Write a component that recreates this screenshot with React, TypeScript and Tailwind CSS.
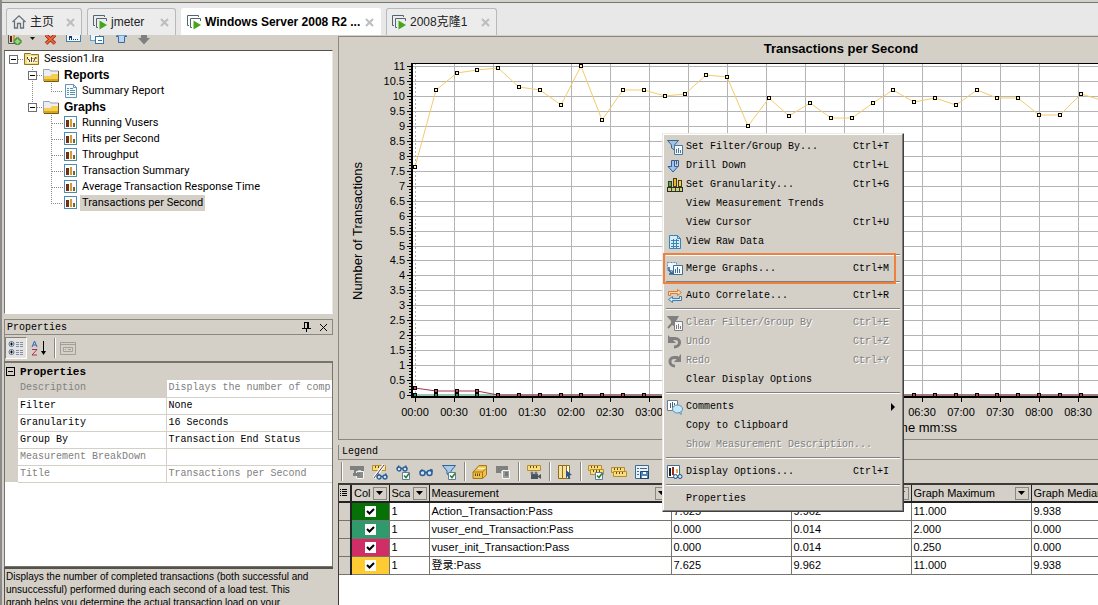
import React from 'react'
import clsx from 'clsx'

const MONO = 'font-["Liberation_Mono","Noto_Sans_CJK_SC",monospace]'
const SANS = 'font-["Liberation_Sans","Noto_Sans_CJK_SC",sans-serif]'
const UI = 'font-["Roboto","Noto_Sans_CJK_SC",sans-serif]'

const svgProps = {
  width: 16,
  height: 16,
  viewBox: '0 0 16 16',
  fill: 'none',
  className: 'shrink-0',
  'aria-hidden': true,
}

/* ---------- tab strip ---------- */

const HomeIcon = () => (
  <svg {...svgProps} stroke="#66717c">
    <path d="M1.5 8 8 1.8 14.5 8M3.5 7v7h3V9.5h3V14h3V7" strokeWidth="1.3" />
  </svg>
)

const MachineIcon = () => (
  <svg {...svgProps}>
    <path d="M3 11.500H1.500V1.500h11V3M6 13.500H4.500v-9h10V7" stroke="#4f6672" />
    <path d="M7.500 6.500 15 11l-7.500 4.500z" fill="#47a51c" />
  </svg>
)

interface TabProps {
  label: string
  icon: React.ReactNode
  width: string
  active?: boolean
}

const Tab: React.FC<TabProps> = ({ label, icon, width, active }) => (
  <div
    className={clsx(
      'flex h-[27px] items-center rounded-t-[3px] border border-b-0 pr-1.5 pl-1',
      width,
      active ? 'border-white bg-white' : 'border-[#b9b9b9] bg-[#ececec]'
    )}
  >
    <button
      className={clsx(
        SANS,
        'flex flex-1 items-center gap-[3px] text-left text-[12px] whitespace-nowrap',
        active ? 'font-bold text-black' : 'text-[#222]'
      )}
    >
      {icon}
      {label}
    </button>
    <button aria-label={`Close ${label}`}>
      <svg width="9" height="9" viewBox="0 0 9 9" stroke="#bdbdbd" strokeWidth="2">
        <path d="m1 1 7 7M8 1 1 8" />
      </svg>
    </button>
  </div>
)

/* ---------- session tree ---------- */

const SessionIcon = () => (
  <svg {...svgProps}>
    <path d="M.5 2.500h6l1 1h7v10H.5z" fill="#f3dc83" stroke="#8d7527" />
    <path d="M3 5h10v7H3z" fill="#fff7d0" />
    <path d="M3.500 6v2l2 1v2M7.500 6v5M9.500 11l2-5M12 6v2M9 7v1M12 10v1" stroke="#54401b" />
  </svg>
)

const FolderIcon = () => (
  <svg {...svgProps}>
    <path d="M.5 2.500h6l1 1.500h8v10H.5z" fill="#eceef3" stroke="#9aa0ae" />
    <path d="M1 9h6l2-2h6.500v7.500H1z" fill="#f3cf4c" />
    <path d="M1 12h14.500v2.500H1z" fill="#d9a51d" />
    <path d="M15.500 4v10.500H1" stroke="#6f5a18" />
  </svg>
)

const ReportIcon = () => (
  <svg {...svgProps}>
    <path d="M2.500 1.500h8l3 3v10h-11z" fill="#f5fbff" stroke="#6c93ad" />
    <path d="M10.500 1.500v3h3" stroke="#6c93ad" />
    <path d="M4 5.500h2M7 5.500h3M4 7.500h2M7 7.500h5M4 9.500h2M7 9.500h5M4 11.500h2M7 11.500h5" stroke="#5a8fa9" />
  </svg>
)

const GraphIcon = () => (
  <svg {...svgProps} shapeRendering="crispEdges">
    <rect x="1.500" y="1.500" width="12" height="12" fill="#fff" stroke="#4c8cb4" />
    <path d="M3 5h3v7H3z" fill="#7a2c10" />
    <path d="M7 4h2v8H7z" fill="#d39b3c" />
    <path d="M10 8h2v4h-2z" fill="#75651d" />
  </svg>
)

const Guide: React.FC<{ level: number; last?: boolean; mid?: boolean }> = ({ level, last, mid }) => {
  const width = [19, 38, 58][level]
  const box = [4, 23][level]
  return (
    <svg
      width={width}
      height="16"
      className="shrink-0"
      fill="none"
      stroke="#8a8a8a"
      strokeDasharray="1 1"
      shapeRendering="crispEdges"
      aria-hidden
    >
      {level === 1 && <path d={last ? 'M27.500 0v4M32 8.500h6' : 'M27.500 0v16M32 8.500h6'} />}
      {level === 0 && <path d="M13 8.500h6" />}
      {level === 2 && <path d={last ? 'M46.500 0v8.500H58' : 'M46.500 0v16M47 8.500h11'} />}
      {level === 2 && mid && <path d="M27.500 0v16" />}
      {box && (
        <g strokeDasharray="none">
          <rect x={box + 0.5} y="4.500" width="8" height="8" fill="#fff" stroke="#6f6f6f" />
          <path d={`M${box + 2} 8.500h5`} stroke="#000" />
        </g>
      )}
    </svg>
  )
}

const GRAPHS = [
  'Running Vusers',
  'Hits per Second',
  'Throughput',
  'Transaction Summary',
  'Average Transaction Response Time',
  'Transactions per Second',
]

const SessionTree = () => (
  <ul
    className={clsx(
      UI,
      'h-[264px] shrink-0 overflow-hidden border border-t-[#55524c] border-r-[#e8e5de] border-b-white border-l-[#77746d] bg-white text-[11px] text-black'
    )}
  >
    <li className="flex h-4 items-center">
      <Guide level={0} />
      <SessionIcon />
      <span className="pl-1">Session1.lra</span>
    </li>
    <li className="flex h-4 items-center">
      <Guide level={1} />
      <FolderIcon />
      <span className={clsx(SANS, 'pl-[5px] text-[12px] font-bold')}>Reports</span>
    </li>
    <li className="flex h-4 items-center">
      <Guide level={2} last mid />
      <ReportIcon />
      <span className="pl-[3px]">Summary Report</span>
    </li>
    <li className="flex h-4 items-center">
      <Guide level={1} last />
      <FolderIcon />
      <span className={clsx(SANS, 'pl-[5px] text-[12px] font-bold')}>Graphs</span>
    </li>
    {GRAPHS.map((name, i) => {
      const last = i === GRAPHS.length - 1
      return (
        <li key={name} className="flex h-4 items-center">
          <Guide level={2} last={last} />
          <GraphIcon />
          <span className={clsx('ml-px h-4 px-0.5 leading-4', last && 'bg-[#d4d0c8]')}>{name}</span>
        </li>
      )
    })}
  </ul>
)

const SessionToolbar = () => (
  <div className="flex h-[15px] shrink-0 items-start pl-1">
    <button aria-label="Add graph" className="mr-[7px]">
      <svg width="14" height="10" viewBox="0 0 14 10" fill="none">
        <path d="M.5 0v8.500H7" stroke="#5a5a5a" />
        <path d="M2 1h2v6H2z" fill="#5b1f14" />
        <path d="M5 0h2v5H5z" fill="#d39b3c" />
        <path d="M8 3h3v2h2v3h-2v2H8V8H6V5h2z" fill="#9ad27d" stroke="#2e7d24" />
      </svg>
    </button>
    <button aria-label="Add graph menu" className="mr-2">
      <svg width="7" height="6" viewBox="0 0 7 6">
        <path d="M1 2h5L3.500 5z" fill="#111" />
      </svg>
    </button>
    <button aria-label="Delete" className="mr-[9px]">
      <svg width="13" height="10" viewBox="0 0 13 10" fill="none">
        <path d="M2 0 11 8.500M11 0 2 8.500" stroke="#8f1f0c" strokeWidth="3.500" />
        <path d="M2 0 11 8.500M11 0 2 8.500" stroke="#f0643c" strokeWidth="2" />
      </svg>
    </button>
    <button aria-label="Rename" className="mr-[9px]">
      <svg width="15" height="10" viewBox="0 0 15 10" fill="none" shapeRendering="crispEdges">
        <path d="M.5 0v6.500h14V0" fill="#eef6fb" stroke="#4381a8" />
        <path d="M3 4.500V1h2v3.500M3 2.500h2M7 4.500h1M9 4.500h1M11 4.500h1" stroke="#1d3c63" />
      </svg>
    </button>
    <button aria-label="Duplicate" className="mr-[10px]">
      <svg width="15" height="10" viewBox="0 0 15 10" fill="none" shapeRendering="crispEdges">
        <path d="M.5 0v5.500h9V0" fill="#eef6fb" stroke="#5e9fc6" />
        <path d="M5.500 1.500h8v7h-8z" fill="#fff" stroke="#2f78a8" />
        <path d="M8 5.500h4" stroke="#2f78a8" />
      </svg>
    </button>
    <button aria-label="Move up" className="mr-[9px]">
      <svg width="13" height="10" viewBox="0 0 13 10">
        <path d="M1 1.500 3 0h7l2 1.500H9.500v6h-6v-6z" fill="#bcd6f0" stroke="#396ba3" />
      </svg>
    </button>
    <button aria-label="Move down">
      <svg width="14" height="10" viewBox="0 0 14 10">
        <path d="M4 0h6v3h3L7 9.500 1 3h3z" fill="#808080" />
      </svg>
    </button>
  </div>
)

/* ---------- properties ---------- */

const PROPERTIES = [
  { name: 'Description', value: 'Displays the number of completed', readOnly: true },
  { name: 'Filter', value: 'None' },
  { name: 'Granularity', value: '16 Seconds' },
  { name: 'Group By', value: 'Transaction End Status' },
  { name: 'Measurement BreakDown', value: '', readOnly: true },
  { name: 'Title', value: 'Transactions per Second', readOnly: true },
]

const PropertiesPanel = () => (
  <section className={clsx(MONO, 'mt-[5px] flex min-h-0 flex-1 flex-col text-[10px] text-black')}>
    <header className="flex h-4 shrink-0 items-center border border-[#8a877f] pr-1 pl-0.5">
      <h2 className="flex-1">Properties</h2>
      <button aria-label="Pin" className="mr-2">
        <svg width="9" height="10" viewBox="0 0 9 10" fill="none" stroke="#000" shapeRendering="crispEdges">
          <path d="M2.500 6V.5h4V6M5.500 1v5M0 6.500h9M4.500 7v3" />
        </svg>
      </button>
      <button aria-label="Close">
        <svg width="9" height="9" viewBox="0 0 9 9" stroke="#000">
          <path d="m1 1 7 7M8 1 1 8" />
        </svg>
      </button>
    </header>

    <div className="flex h-[26px] shrink-0 items-center border-l border-[#8a877f]">
      <button
        aria-label="Categorized"
        className="mr-1 border border-t-[#808080] border-r-white border-b-white border-l-[#808080] bg-[#e6e3dd] p-0.5"
      >
        <svg {...svgProps}>
          <circle cx="3.500" cy="4" r="2.500" fill="#fff" stroke="#4a6ea0" />
          <circle cx="3.500" cy="12" r="2.500" fill="#fff" stroke="#4a6ea0" />
          <path d="M2 4h3M3.500 2.500v3M2 12h3M3.500 10.500v3" stroke="#000" />
          <path d="M8 2.500h7M8 4.500h7M8 6.500h7M8 10.500h7M8 12.500h7M8 14.500h7" stroke="#7d8fb5" strokeDasharray="3 1" />
        </svg>
      </button>
      <button aria-label="Alphabetical">
        <svg {...svgProps}>
          <path d="M1 7 3.500 1 6 7M2 5h3" stroke="#3465b0" />
          <path d="M1 9.500h5L1 15h5" stroke="#b0304f" />
          <path d="M12.500 1v12" stroke="#000" />
          <path d="M10 11h5l-2.500 4z" fill="#000" />
        </svg>
      </button>
      <span className="mr-1 ml-[7px] h-5 w-0.5 border-l border-[#8a877f] bg-white" />
      <button aria-label="Property pages" disabled>
        <svg {...svgProps} stroke="#a29f97">
          <path d="M.5 2.500h15v12H.5zM.5 4.500h15" />
          <path d="M3.500 7.500h9v4h-9zM5 9.500h1M8 9.500h3" />
        </svg>
      </button>
    </div>

    <div className="min-h-0 flex-1 overflow-hidden border border-t-2 border-[#77746d] bg-white">
      <table className="w-full table-fixed border-collapse">
        <colgroup>
          <col className="w-[13px]" />
          <col className="w-[148px]" />
          <col />
        </colgroup>
        <thead>
          <tr className="h-[17px] bg-[#d4d0c8]">
            <th className="p-0">
              <button aria-label="Collapse" className="block">
                <svg width="11" height="9" viewBox="0 0 11 9" fill="none" stroke="#000" shapeRendering="crispEdges">
                  <path d="M1.500.5h8v8h-8zM3 4.500h5" />
                </svg>
              </button>
            </th>
            <th colSpan={2} className="p-0 pl-0.5 text-left text-[11px] leading-4">
              Properties
            </th>
          </tr>
        </thead>
        <tbody>
          {PROPERTIES.map((p, i) => (
            <tr key={p.name} className={clsx('h-[17px]', p.readOnly && 'text-[#808080]')}>
              <td className="bg-[#d4d0c8] p-0" />
              <th
                scope="row"
                className={clsx(
                  'border-r border-b border-[#d4d0c8] p-0 pl-0.5 text-left leading-4 font-normal',
                  i === 0 && 'bg-[#d4d0c8]'
                )}
              >
                {p.name}
              </th>
              <td className="overflow-hidden border-b border-[#d4d0c8] p-0 pl-0.5 leading-4 whitespace-nowrap">
                {p.value}
              </td>
            </tr>
          ))}
        </tbody>
      </table>
    </div>

    <p
      className={clsx(
        SANS,
        'h-[38px] shrink-0 overflow-hidden border-t-2 border-l border-[#55524c] px-px pt-px text-[10px] leading-[13px] whitespace-nowrap'
      )}
    >
      Displays the number of completed transactions (both successful and
      <br />
      unsuccessful) performed during each second of a load test. This
      <br />
      graph helps you determine the actual transaction load on your
    </p>
  </section>
)

/* ---------- chart ---------- */

const X0 = 76
const Y0 = 358
const STEP_X = 20.8
const UNIT_Y = 29.9

const LOGIN = [
  7.63, 10.2, 10.78, 10.88, 10.95, 10.3, 10.2, 9.7, 11, 9.2, 10.2, 10.2, 10, 10.07, 10.7, 10.63, 9, 9.93, 9.33,
  9.77, 9.27, 9.27, 9.77, 10.2, 9.8, 9.93, 9.7, 10.2, 9.93, 9.93, 9.37, 9.37, 10.07, 9.85,
]
const INIT = LOGIN.map((_, i) => (i === 0 ? 0.25 : i < 4 ? 0.125 : 0))
const END = LOGIN.map(() => 0)

const px = (i: number) => Math.round(X0 + i * STEP_X)
const py = (v: number) => Math.round(Y0 - v * UNIT_Y)
const points = (values: number[]) => values.map((v, i) => `${px(i)},${py(v)}`).join(' ')

const Markers: React.FC<{ values: number[]; fill: string }> = ({ values, fill }) => (
  <>
    {values.map((v, i) => (
      <rect key={i} x={px(i) - 1.5} y={py(v) - 1.5} width="3" height="3" fill={fill} stroke="#000" />
    ))}
  </>
)

const time = (n: number) => `${String(Math.floor(n / 2)).padStart(2, '0')}:${n % 2 ? '30' : '00'}`

// 0:00 to 8:30, the part of the run that fits the window
const TIMES = Array.from({ length: 18 }, (_, i) => i)
const VALUES = Array.from({ length: 23 }, (_, i) => i)

const Chart = () => (
  <svg
    width="100%"
    height="404"
    className='block shrink-0 border-y border-l border-[#8a877f] bg-[#d4d0c8] font-["Liberation_Sans",sans-serif]'
    role="img"
    aria-label="Transactions per Second"
  >
    <g shapeRendering="crispEdges">
      <rect x="73" y="26" width="100%" height="334" fill="#fff" />
      {VALUES.slice(1).map((i) => (
        <path key={i} d={`M73 ${py(i / 2) + 0.5}H3000`} stroke="#b4b4b4" />
      ))}
      {TIMES.map((i) => (
        <path
          key={i}
          d={`M${X0 + i * 39 + 0.5} 26V360`}
          stroke="#b4b4b4"
          strokeDasharray={i === 0 ? '2 2' : undefined}
        />
      ))}
      {Array.from({ length: 111 }, (_, i) => (
        <path key={i} d={`M70 ${py(i / 10) + 0.5}h2`} stroke="#000" />
      ))}
      {VALUES.map((i) => (
        <path key={i} d={`M68 ${py(i / 2) + 0.5}h4`} stroke="#000" />
      ))}
      {TIMES.map((i) => (
        <path key={i} d={`M${X0 + i * 39 + 0.5} 361v4`} stroke="#000" />
      ))}
      <path d="M72 26.500H3000" stroke="#000" />
      <path d="M73 26V361M72 360H3000" stroke="#000" strokeWidth="2" />
    </g>
    <polyline points={points(LOGIN)} fill="none" stroke="#f5cb6b" />
    <polyline points={points(END)} fill="none" stroke="#2f8f68" />
    <polyline points={points(INIT)} fill="none" stroke="#a8324f" />
    <g shapeRendering="crispEdges">
      <Markers values={LOGIN} fill="#fff3a8" />
      <Markers values={END} fill="#2f8f68" />
      <Markers values={INIT} fill="#c24b66" />
    </g>
    <g fontSize="11" fill="#000">
      {VALUES.map((i) => (
        <text key={i} x="66" y={py(i / 2) + 4} textAnchor="end">
          {i / 2}
        </text>
      ))}
      {TIMES.map((i) => (
        <text key={i} x={X0 + i * 39} y="379" textAnchor="middle">
          {time(i)}
        </text>
      ))}
    </g>
    <text x="502" y="16" fontSize="13" fontWeight="bold" textAnchor="middle">
      Transactions per Second
    </text>
    <text x="618" y="395" fontSize="13" textAnchor="end">
      Elapsed scenario time mm:ss
    </text>
    <text x="-194" y="23" fontSize="13" textAnchor="middle" transform="rotate(-90)">
      Number of Transactions
    </text>
  </svg>
)

/* ---------- legend ---------- */

const Ruler: React.FC<{ x?: number; y?: number }> = ({ x = 0, y = 0 }) => (
  <g transform={`translate(${x} ${y})`}>
    <path d="M1.500 2.500h13v5h-13z" fill="#f8dc80" stroke="#b98d2a" />
    <path d="M4.500 3v2M7.500 3v2M10.500 3v2" stroke="#6a4c0c" />
  </g>
)

const Glasses: React.FC<{ x?: number; y?: number }> = ({ x = 0, y = 0 }) => (
  <g transform={`translate(${x} ${y})`} stroke="#2a5f97" strokeWidth="1.300">
    <circle cx="3" cy="5" r="2" fill="#cfe6f8" />
    <circle cx="9" cy="5" r="2" fill="#cfe6f8" />
    <path d="M1 5 3 1.500M11 5 9.500 1.500M5 4.500h2" />
  </g>
)

const BigGlasses = () => (
  <g stroke="#2a5f97" strokeWidth="1.500">
    <circle cx="4.500" cy="9" r="2.500" fill="#cfe6f8" />
    <circle cx="11.500" cy="9" r="2.500" fill="#cfe6f8" />
    <path d="M2 8 4.500 5.500M14 8V6l-2-.5M7 8.500h2" />
  </g>
)

const Tick = () => (
  <g>
    <path d="M7.500 8.500h7v7h-7z" fill="#fff" stroke="#5d7f99" />
    <path d="m9 11.500 2 2 3-4" stroke="#2d7a31" strokeWidth="1.500" />
  </g>
)

const LEGEND_TOOLS: { label: string; icon: React.ReactNode }[][] = [
  [
    {
      label: 'Hide',
      icon: (
        <>
          <path d="M1 2h14v5h-3V6H9v3H5V6H1z" fill="#808080" />
          <path d="M7.500 7.500h7v7h-7z" fill="#8c8c8c" stroke="#f5f5f5" />
          <path d="M4 9h7v3H4z" fill="#808080" />
        </>
      ),
    },
    {
      label: 'Show only',
      icon: (
        <>
          <Ruler x={-1} y={-1} />
          <path d="m2 14 10-13" stroke="#fff" strokeWidth="3" />
          <path d="m2 14 10-13" stroke="#444" />
          <Glasses x={4} y={8} />
        </>
      ),
    },
    {
      label: 'Show filtered',
      icon: (
        <>
          <Glasses x={1} />
          <Tick />
        </>
      ),
    },
    { label: 'Show all', icon: <BigGlasses /> },
    {
      label: 'Filter',
      icon: (
        <>
          <path d="M1.500 1.500h13L10 7v6l-4-3V7z" fill="#a8cbea" stroke="#2e6496" />
          <Tick />
        </>
      ),
    },
  ],
  [
    {
      label: 'Configure',
      icon: (
        <>
          <path d="M1 8 7 1.500h7.500V11l-4 3.500H1z" fill="#f0c04a" stroke="#a6781a" />
          <path d="M6 4.500h8" stroke="#fff3c4" strokeWidth="1.500" />
          <path d="M1 8h9.500v6.500M10.500 8l4-4" stroke="#a6781a" />
          <path d="M3.500 12V9.500M5.500 12V9.500M7.500 12V9.500" stroke="#6a4c0c" />
        </>
      ),
    },
    {
      label: 'Copy',
      icon: (
        <>
          <path d="M1 2h12v5H6v2H1z" fill="#808080" />
          <path d="M7.500 6.500h7v8h-7z" fill="#9a9a9a" stroke="#f5f5f5" />
          <path d="M10 9h3M10 11h3" stroke="#555" />
        </>
      ),
    },
  ],
  [
    {
      label: 'Record',
      icon: (
        <>
          <Ruler y={-1} />
          <path d="M5 10h7v5H5zM12 12l3-2v5l-3-2z" fill="#4a5560" />
          <circle cx="6" cy="9" r="1.500" fill="#6c7781" />
          <circle cx="10" cy="9" r="1.500" fill="#6c7781" />
        </>
      ),
    },
  ],
  [
    {
      label: 'Columns',
      icon: (
        <>
          <path d="M1.500 1.500h4v13h-4zM5.500 1.500h4v13h-4z" fill="#f6e29b" stroke="#8d6d1d" />
          <path d="M9.500 1.500h3v13h-3z" fill="#fff" stroke="#8d6d1d" />
          <path d="m9 6 6 5-3 .5 1.500 3-2 .5-1-3-1.500 2z" fill="#2b558c" />
        </>
      ),
    },
  ],
  [
    {
      label: 'Select measurements',
      icon: (
        <>
          <Ruler x={-1} y={-1} />
          <Ruler x={1} y={3} />
          <Tick />
        </>
      ),
    },
    {
      label: 'Measurements',
      icon: (
        <>
          <Ruler x={-1} y={1} />
          <Ruler x={1} y={5} />
        </>
      ),
    },
    {
      label: 'Save',
      icon: (
        <>
          <path d="M1.500 1.500h13v13h-13z" fill="#e8f1f8" stroke="#41698c" />
          <path d="M3 4.500h2M6 4.500h7M3 7.500h2M3 10.500h2" stroke="#41698c" />
          <path d="M6.500 7.500h8v7h-8z" fill="#4f86bc" stroke="#1f456d" />
          <path d="M9 8h3v2H9zM8 12h5v2H8z" fill="#fff" />
        </>
      ),
    },
  ],
]

const COLUMNS = [
  { title: 'Col', width: 'w-[38px]' },
  { title: 'Sca', width: 'w-[40px]' },
  { title: 'Measurement', width: 'w-[242px]' },
  { title: 'Graph Minimum', width: 'w-[120px]' },
  { title: 'Graph Average', width: 'w-[120px]' },
  { title: 'Graph Maximum', width: 'w-[120px]' },
  { title: 'Graph Median', width: 'w-[120px]' },
]

const ROWS = [
  { color: 'bg-[#067106]', name: 'Action_Transaction:Pass', cells: ['7.625', '9.962', '11.000', '9.938'] },
  { color: 'bg-[#2f9b6c]', name: 'vuser_end_Transaction:Pass', cells: ['0.000', '0.014', '2.000', '0.000'] },
  { color: 'bg-[#cf2f66]', name: 'vuser_init_Transaction:Pass', cells: ['0.000', '0.014', '0.250', '0.000'] },
  { color: 'bg-[#ffcb32]', name: '登录:Pass', cells: ['7.625', '9.962', '11.000', '9.938'] },
]

const Legend = () => (
  <section className="mt-[5px] flex min-h-0 flex-1 flex-col overflow-hidden text-black">
    <h2
      className={clsx(
        MONO,
        'h-[15px] shrink-0 border-b border-l border-[#8a877f] pl-[3px] text-[10px] leading-[14px]'
      )}
    >
      Legend
    </h2>
    <div className="flex h-[23px] shrink-0 items-center gap-[7px] pl-[3px]">
      {LEGEND_TOOLS.map((group, i) => (
        <React.Fragment key={i}>
          <span className="h-[19px] w-px bg-[#8a877f] shadow-[1px_0_0_#fff]" />
          {group.map((tool) => (
            <button key={tool.label} aria-label={tool.label}>
              <svg {...svgProps}>{tool.icon}</svg>
            </button>
          ))}
        </React.Fragment>
      ))}
    </div>
    <div className="min-h-0 flex-1 overflow-hidden border-t-2 border-l border-[#3c3a36] bg-white">
      <table className={clsx(SANS, 'w-[812px] table-fixed border-collapse text-[11px]')}>
        <thead>
          <tr className="h-[17px] border-b-2 border-[#222] bg-[#d4d0c8]">
            <th className="w-[12px] border-r-2 border-[#222] p-0">
              <svg width="9" height="10" viewBox="0 0 9 10" stroke="#000" shapeRendering="crispEdges" aria-hidden>
                <path d="M1 1.500h1M3 1.500h5M1 3.500h1M3 3.500h5M1 5.500h1M3 5.500h5M1 7.500h1M3 7.500h5" />
              </svg>
            </th>
            {COLUMNS.map((c) => (
              <th key={c.title} className={clsx(c.width, 'border-r border-[#222] p-0 font-normal')}>
                <div className="flex h-[15px] items-center justify-between overflow-hidden pl-0.5 whitespace-nowrap">
                  <span className="min-w-0 overflow-hidden">{c.title}</span>
                  <button
                    aria-label={`Filter ${c.title}`}
                    className="mr-0.5 flex h-[13px] w-[14px] shrink-0 items-center justify-center border border-[#8a877f]"
                  >
                    <svg width="7" height="4" viewBox="0 0 7 4" aria-hidden>
                      <path d="M0 0h7L3.500 4z" />
                    </svg>
                  </button>
                </div>
              </th>
            ))}
          </tr>
        </thead>
        <tbody>
          {ROWS.map((row) => (
            <tr key={row.name} className="h-[18px] border-b border-[#77746d] leading-4">
              <td className="border-r-2 border-[#222] bg-[#d4d0c8] p-0" />
              <td className={clsx('border-r border-[#77746d] p-0', row.color)}>
                <label className="relative mx-auto block size-[11px]">
                  <input
                    type="checkbox"
                    defaultChecked
                    aria-label={row.name}
                    className="peer block size-[11px] appearance-none bg-white"
                  />
                  <svg
                    viewBox="0 0 11 11"
                    fill="none"
                    stroke="#000"
                    strokeWidth="2"
                    className="pointer-events-none absolute inset-0 hidden peer-checked:block"
                  >
                    <path d="m2 5 2.500 2.500L9 3" />
                  </svg>
                </label>
              </td>
              <td className="border-r border-[#77746d] p-0 pl-0.5">1</td>
              <td className="border-r border-[#77746d] p-0 pl-0.5">{row.name}</td>
              {row.cells.map((cell, i) => (
                <td key={i} className="border-r border-[#77746d] p-0 pl-0.5">
                  {cell}
                </td>
              ))}
            </tr>
          ))}
        </tbody>
      </table>
    </div>
  </section>
)

/* ---------- context menu ---------- */

const FilterGroupIcon: React.FC<{ gray?: boolean }> = ({ gray }) => (
  <svg {...svgProps}>
    <path
      d="M.5 1.500h11L7.500 6v5l-3-2V6z"
      fill={gray ? '#808080' : '#9fc3e4'}
      stroke={gray ? '#808080' : '#3c618c'}
    />
    <path d="M7.500 6.500h8v9h-8z" fill="#f4f6f8" stroke={gray ? '#808080' : '#4a7ba5'} />
    <path d="M9.500 14v-4M11.500 14V9M13.500 14v-3" stroke={gray ? '#808080' : '#4a7ba5'} />
    {gray && <path d="m1 13 9-10" stroke="#808080" strokeWidth="2" />}
  </svg>
)

const DrillIcon = () => (
  <svg {...svgProps}>
    <path d="M4.500 2.500h3v6h3.500L6 14 1 8.500h3.500z" fill="#9fc3ee" stroke="#2e5f9c" />
    <path d="M7.500 2.500h4v6M9.500 2.500v4" stroke="#2e5f9c" />
  </svg>
)

const GranularityIcon = () => (
  <svg {...svgProps} shapeRendering="crispEdges">
    <path d="M1.500 4.500h3v5h-3z" fill="#5ea846" stroke="#2e3d1d" />
    <path d="M6.500 1.500h3v8h-3z" fill="#e5bd2c" stroke="#4d3d0d" />
    <path d="M11.500 3.500h3v6h-3z" fill="#efd14d" stroke="#4d3d0d" />
    <path d="M.5 10.500h15v4H.5z" fill="#b7db85" stroke="#2b2b2b" />
    <path d="M4.500 11v3M8.500 11v3M12.500 11v3" stroke="#7a2b1a" />
  </svg>
)

const RawDataIcon = () => (
  <svg {...svgProps}>
    <path d="M2.500 1.500h8l3 3v10h-11z" fill="#d4ecfa" stroke="#3b83b4" />
    <path d="M10.500 1.500v3h3M4 6.500h8M4 9.500h8M4 12.500h8M6.500 5v9M9.500 5v9" stroke="#3b83b4" />
  </svg>
)

const MergeIcon = () => (
  <svg {...svgProps}>
    <path d="M.5 1.500h9v8h-9z" fill="#eef6fb" stroke="#5d8fb4" strokeDasharray="2 1" />
    <path d="M6.500 4.500h9v9h-9z" fill="#f8fbfd" stroke="#3d6f97" />
    <path d="M8.500 12V8M10.500 12V6M12.500 12V8" stroke="#3d6f97" />
    <path d="M2 6v3l3 4M2 13h4v-3" stroke="#2c6699" strokeWidth="1.500" />
  </svg>
)

const CorrelateIcon = () => (
  <svg {...svgProps}>
    <path d="M1.500 7.500v-4h9v-2l4 3-4 3v-2h-7v2z" fill="#fbd9b8" stroke="#d97b33" />
    <path d="M14.500 8.500v4h-9v2l-4-3 4-3v2h7v-2z" fill="#d6e8f6" stroke="#3f7fb0" />
  </svg>
)

const UndoIcon = () => (
  <svg {...svgProps}>
    <path d="M2 4.500h6c6.500 0 6 8.500-1 8.500" stroke="#808080" strokeWidth="3" />
    <path d="M1 1v8h8z" fill="#808080" />
  </svg>
)

const RedoIcon = () => (
  <svg {...svgProps}>
    <path d="M11 4.500H7c-5.500 0-5.500 8.500 1 8.500" stroke="#808080" strokeWidth="3" />
    <path d="M14 1v8H7z" fill="#808080" />
  </svg>
)

const CommentsIcon = () => (
  <svg {...svgProps}>
    <path d="M.5 1.500h10v10H.5z" fill="#fff" stroke="#64809a" />
    <path d="M3.500 4v5M5.500 3v6M7.500 4v2" stroke="#4d5b68" />
    <ellipse cx="10.500" cy="10" rx="5" ry="4" fill="#c9e7f8" stroke="#4e93bd" />
    <path d="m12 13 2 2.500V12" fill="#c9e7f8" stroke="#4e93bd" />
  </svg>
)

const DisplayIcon = () => (
  <svg {...svgProps}>
    <path d="M.5 1.500h12v12H.5z" fill="#fff" stroke="#3d6f97" />
    <path d="M2 4h2v8H2z" fill="#1d1d1d" />
    <path d="M5 3h2v8H5z" fill="#a02a22" />
    <path d="M9 5h2v4H9z" fill="#e0b23a" />
    <circle cx="8.500" cy="12.500" r="2" fill="#cfe6f8" stroke="#1f4d85" />
    <circle cx="13" cy="12.500" r="2" fill="#cfe6f8" stroke="#1f4d85" />
  </svg>
)

interface MenuEntry {
  label: string
  shortcut?: string
  icon?: React.ReactNode
  disabled?: boolean
  submenu?: boolean
  highlighted?: boolean
}

const MENU: MenuEntry[][] = [
  [
    { label: 'Set Filter/Group By...', shortcut: 'Ctrl+T', icon: <FilterGroupIcon /> },
    { label: 'Drill Down', shortcut: 'Ctrl+L', icon: <DrillIcon /> },
    { label: 'Set Granularity...', shortcut: 'Ctrl+G', icon: <GranularityIcon /> },
    { label: 'View Measurement Trends' },
    { label: 'View Cursor', shortcut: 'Ctrl+U' },
    { label: 'View Raw Data', icon: <RawDataIcon /> },
  ],
  [{ label: 'Merge Graphs...', shortcut: 'Ctrl+M', icon: <MergeIcon />, highlighted: true }],
  [{ label: 'Auto Correlate...', shortcut: 'Ctrl+R', icon: <CorrelateIcon /> }],
  [
    { label: 'Clear Filter/Group By', shortcut: 'Ctrl+E', icon: <FilterGroupIcon gray />, disabled: true },
    { label: 'Undo', shortcut: 'Ctrl+Z', icon: <UndoIcon />, disabled: true },
    { label: 'Redo', shortcut: 'Ctrl+Y', icon: <RedoIcon />, disabled: true },
    { label: 'Clear Display Options' },
  ],
  [
    { label: 'Comments', icon: <CommentsIcon />, submenu: true },
    { label: 'Copy to Clipboard' },
    { label: 'Show Measurement Description...', disabled: true },
  ],
  [{ label: 'Display Options...', shortcut: 'Ctrl+I', icon: <DisplayIcon /> }],
  [{ label: 'Properties' }],
]

const ContextMenu = () => (
  <div
    className={clsx(
      MONO,
      'absolute top-[133px] left-[660px] w-[242px] border border-t-[#eceae5] border-r-[#404040] border-b-[#404040] border-l-[#eceae5] bg-[#d4d0c8] text-[10px] text-black shadow-[inset_-1px_-1px_0_#808080,inset_1px_1px_0_#fff]'
    )}
  >
    <div className="px-[3px] py-[3px]">
      {MENU.map((group, i) => (
        <ul
          key={i}
          className={clsx(i > 0 && 'mt-[3px] border-t border-[#808080] pt-1 shadow-[inset_0_1px_0_#fff]')}
        >
          {group.map((item) => (
            <li key={item.label} className="relative">
              <button
                disabled={item.disabled}
                className={clsx(
                  'flex h-[19px] w-full items-center pr-[11px] pl-px text-left whitespace-nowrap',
                  item.disabled && 'text-[#808080] [text-shadow:1px_1px_0_#fff]'
                )}
              >
                <span className="mr-[3px] size-4 shrink-0">{item.icon}</span>
                <span className="flex-1">{item.label}</span>
                {item.shortcut && <span>{item.shortcut}</span>}
                {item.submenu && (
                  <svg width="4" height="8" viewBox="0 0 4 8" className="-mr-1.5" aria-hidden>
                    <path d="M0 0v8l4-4z" />
                  </svg>
                )}
              </button>
              {item.highlighted && (
                <span className="pointer-events-none absolute -inset-y-1.5 right-1 -left-[3px] border-2 border-[#ee8140]" />
              )}
            </li>
          ))}
        </ul>
      ))}
    </div>
  </div>
)

export default function App() {
  return (
    <main className="relative flex h-screen flex-col overflow-hidden border-l-2 border-[#8b8b8b] bg-[#d4d0c8]">
      <nav className="mt-0.5 flex h-[33px] shrink-0 items-end gap-[5px] border-t border-[#6d7876] bg-[#e8e8e8] pl-1">
        <Tab label="主页" icon={<HomeIcon />} width="w-[76px]" />
        <Tab label="jmeter" icon={<MachineIcon />} width="w-[89px]" />
        <Tab label="Windows Server 2008 R2 ..." icon={<MachineIcon />} width="w-[200px]" active />
        <Tab label="2008克隆1" icon={<MachineIcon />} width="w-[111px]" />
      </nav>
      <div className="grid min-h-0 flex-1 grid-cols-[329px_1fr] gap-[5px] pl-0.5">
        <div className="flex min-h-0 min-w-0 flex-col">
          <SessionToolbar />
          <SessionTree />
          <PropertiesPanel />
        </div>
        <div className="flex min-h-0 min-w-0 flex-col pt-px">
          <Chart />
          <Legend />
        </div>
      </div>
      <ContextMenu />
    </main>
  )
}
